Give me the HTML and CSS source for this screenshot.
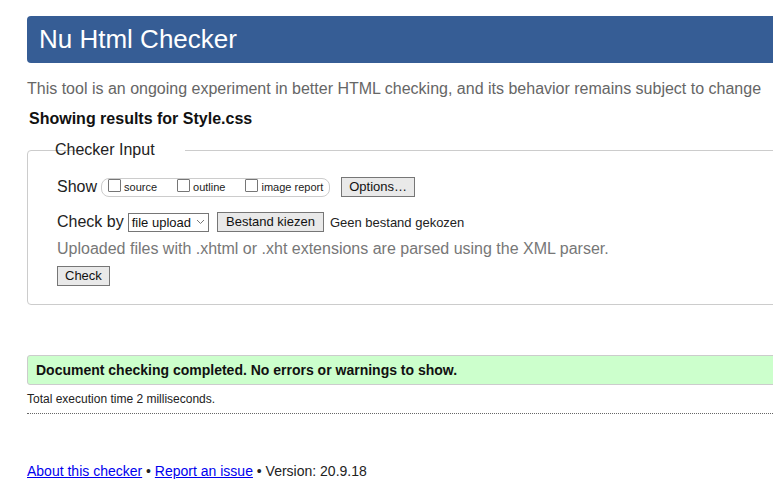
FILE: index.html
```html
<!DOCTYPE html>
<html lang="en">
<head>
<meta charset="utf-8">
<title>Nu Html Checker</title>
<link rel="stylesheet" href="styles.css">
</head>
<body>
<div class="page">
  <h1 class="banner">Nu Html Checker</h1>
  <p class="intro">This tool is an ongoing experiment in better HTML checking, and its behavior remains subject to change</p>
  <p class="showing">Showing results for Style.css</p>
  <fieldset class="input">
    <legend>Checker Input</legend>
    <div class="row show-row">
      <span class="lbl">Show</span>
      <span class="pill">
        <label class="opt"><span class="box"></span>source</label>
        <label class="opt"><span class="box"></span>outline</label>
        <label class="opt"><span class="box"></span>image report</label>
      </span>
      <span class="btn opts">Options…</span>
    </div>
    <div class="row by-row">
      <span class="lbl">Check by</span>
      <span class="select">file upload<svg class="chev" width="9" height="6" viewBox="0 0 9 6"><path d="M1 1l3.5 3.5L8 1" fill="none" stroke="#777" stroke-width="1"/></svg></span>
      <span class="btn choose">Bestand kiezen</span>
      <span class="nofile">Geen bestand gekozen</span>
    </div>
    <p class="note">Uploaded files with .xhtml or .xht extensions are parsed using the XML parser.</p>
    <span class="btn check">Check</span>
  </fieldset>
  <p class="success">Document checking completed. No errors or warnings to show.</p>
  <p class="time">Total execution time 2 milliseconds.</p>
  <hr class="dots">
  <p class="footer"><a href="#">About this checker</a> • <a href="#">Report an issue</a> • Version: 20.9.18</p>
</div>
</body>
</html>
```

FILE: styles.css
```css
html, body {
  margin: 0;
  padding: 0;
  overflow: hidden;
  background: #fff;
}
body {
  font-family: "Liberation Sans", Arial, sans-serif;
  color: #222;
}
.page {
  width: 900px;
  padding: 16px 0 0 27px;
}
.banner {
  margin: 0;
  height: 47px;
  box-sizing: border-box;
  background: #365d95;
  color: #fff;
  border-radius: 4px 0 0 4px;
  font-size: 26px;
  font-weight: normal;
  line-height: 47px;
  padding-left: 12px;
}
.intro {
  margin: 16px 0 0 0;
  font-size: 16px;
  line-height: 20px;
  color: #666;
}
.showing {
  margin: 10px 0 0 2px;
  font-size: 16px;
  line-height: 20px;
  font-weight: bold;
  color: #111;
}
.input {
  margin: 12px 0 0 0;
  border: 1px solid #ccc;
  border-radius: 4px;
  padding: 18px 0 18px 29px;
  min-height: 0;
}
.input legend {
  font-size: 16px;
  color: #222;
  padding: 0 1px;
  margin-left: 26px;
  position: relative;
  left: -29px;
}
.row {
  display: flex;
  align-items: center;
  font-size: 16px;
}
.show-row {
  height: 20px;
}
.lbl {
  margin-right: 4px;
}
.pill {
  display: inline-flex;
  align-items: center;
  border: 1px solid #ccc;
  border-radius: 8px;
  height: 17px;
  padding: 0 6px 0 6px;
  gap: 0;
}
.opt {
  display: inline-flex;
  align-items: center;
  font-size: 11px;
  margin-right: 20px;
}
.opt:last-child {
  margin-right: 0;
}
.box {
  width: 11px;
  height: 11px;
  border: 1px solid #767676;
  border-radius: 1px;
  margin-right: 3px;
  margin-top: -3px;
  background: #fff;
}
.btn {
  display: inline-block;
  box-sizing: border-box;
  border: 1px solid #767676;
  background: #e9e9e9;
  color: #111;
  font-size: 13px;
  height: 20px;
  line-height: 18px;
  padding: 0 8px;
}
.opts {
  margin-left: 11px;
  padding: 0 7px;
}
.by-row {
  margin-top: 15px;
  height: 20px;
}
.select {
  display: inline-flex;
  align-items: center;
  box-sizing: border-box;
  border: 1px solid #767676;
  height: 19px;
  font-size: 13px;
  padding: 0 3px 0 3px;
  margin-left: 0;
  color: #111;
}
.chev {
  margin-left: 5px;
}
.choose {
  margin-left: 8px;
  padding: 0 8px;
}
.nofile {
  font-size: 13px;
  margin-left: 6px;
  color: #222;
}
.note {
  margin: 7px 0 0 0;
  font-size: 16px;
  line-height: 20px;
  color: #777;
}
.check {
  margin-top: 7px;
  padding: 0 7px;
}
.success {
  margin: 50px 0 0 0;
  height: 30px;
  box-sizing: border-box;
  border: 1px solid #ccc;
  border-radius: 3px 0 0 3px;
  background: #ccffcc;
  font-size: 14px;
  font-weight: bold;
  line-height: 28px;
  padding-left: 8px;
  color: #111;
}
.time {
  margin: 6px 0 0 0;
  font-size: 12px;
  line-height: 16px;
  color: #222;
}
.dots {
  margin: 6px 0 0 0;
  border: 0;
  border-top: 1px dotted #666;
  height: 0;
}
.footer {
  margin: 48px 0 0 0;
  font-size: 14px;
  line-height: 18px;
  color: #222;
}
.footer a {
  color: #0000ee;
}
```
